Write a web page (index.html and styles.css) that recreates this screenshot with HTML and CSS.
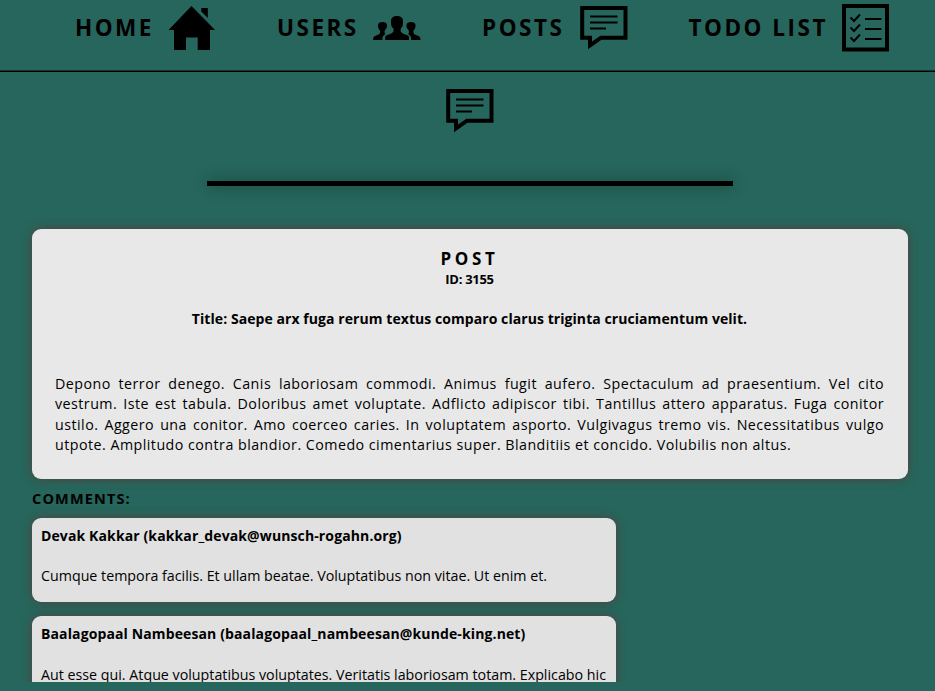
FILE: index.html
```html
<!DOCTYPE html>
<html lang="en">
<head>
<meta charset="utf-8">
<title>Post</title>
<link rel="stylesheet" href="styles.css">
</head>
<body>
<svg width="0" height="0" class="defs">
  <symbol id="posts" viewBox="0 0 48 48">
    <path d="M2.200 4H45.500V33.700H21L10 41.500V33.700H2.200Z" fill="none" stroke="#000" stroke-width="4"/>
    <path d="M10 12.500H37.500M10 18.500H37.500M10 24.500H26" stroke="#000" stroke-width="2"/>
  </symbol>
</svg>
<header class="nav">
  <a class="item"><span class="label home">HOME</span>
    <svg class="icon" viewBox="0 0 48 48"><path d="M23.500 6L47 30H42V50H29.700V37.500H18V50H6V30H0.500Z"/><path d="M33.300 8H39.800V18L33.300 11.500Z"/></svg></a>
  <a class="item"><span class="label users">USERS</span>
    <svg class="icon" viewBox="0 0 48 48"><path d="M12.200 40H36V37C36 34.500 29 34.500 27.700 31.500V28.500C30 27 30 24.500 30 21C30 17.500 27.500 16 24 16S18 17.500 18 21C18 24.500 18 27 20.500 28.500V31.500C19 34.500 12.200 34.500 12.200 37Z"/><path id="side" d="M0 40H9.500C9 36.500 10.500 35.500 12.500 34C11 33 11.500 31 12 30C13.800 28.500 14 27 14 25C14 23 12 22 9.500 22S5 23 5 25C5 27 5.200 29 7 30.500C7.500 34 6 34.500 3 35.500C1 36.500 0 37 0 40Z"/><use href="#side" transform="translate(47.500 0) scale(-1 1)"/></svg></a>
  <a class="item"><span class="label posts">POSTS</span>
    <svg class="icon" viewBox="0 0 48 48"><use href="#posts"/></svg></a>
  <a class="item"><span class="label todo">TODO LIST</span>
    <svg class="icon" viewBox="0 0 48 48"><g fill="none" stroke="#000"><rect x="2" y="6" width="43" height="43.500" stroke-width="4"/><path d="M8.500 17.500L12 21L18 14.500M8.500 27.500L12 31L18 24.500M8.500 37.500L12 41L18 34.500M23 19H39.500M23 29H39.500M23 39H39.500" stroke-width="2"/></g></svg></a>
</header>
<main class="content">
  <svg class="page-icon" viewBox="0 0 48 48"><use href="#posts"/></svg>
  <div class="rule"></div>
  <article class="post">
    <h1>POST</h1>
    <div class="id">ID: 3155</div>
    <h2>Title: Saepe arx fuga rerum textus comparo clarus triginta cruciamentum velit.</h2>
    <p><span class="line">Depono terror denego. Canis laboriosam commodi. Animus fugit aufero. Spectaculum ad praesentium. Vel cito</span>
    <span class="line">vestrum. Iste est tabula. Doloribus amet voluptate. Adflicto adipiscor tibi. Tantillus attero apparatus. Fuga conitor</span>
    <span class="line">ustilo. Aggero una conitor. Amo coerceo caries. In voluptatem asporto. Vulgivagus tremo vis. Necessitatibus vulgo</span>
    <span class="line last">utpote. Amplitudo contra blandior. Comedo cimentarius super. Blanditiis et concido. Volubilis non altus.</span></p>
  </article>
  <h3>COMMENTS:</h3>
  <section class="comments">
    <div class="comment">
      <h4>Devak Kakkar (kakkar_devak@wunsch-rogahn.org)</h4>
      <p>Cumque tempora facilis. Et ullam beatae. Voluptatibus non vitae. Ut enim et.</p>
    </div>
    <div class="comment">
      <h4>Baalagopaal Nambeesan (baalagopaal_nambeesan@kunde-king.net)</h4>
      <p>Aut esse qui. Atque voluptatibus voluptates. Veritatis laboriosam totam. Explicabo hic</p>
    </div>
  </section>
</main>
</body>
</html>
```
FILE: styles.css
```css
* { box-sizing: border-box; margin: 0; padding: 0; }
body {
  width: 935px; height: 691px; overflow: hidden;
  background: #26665c; color: #000;
  font-family: "Open Sans", "Noto Sans", sans-serif;
}
.defs { position: absolute; }
.nav {
  display: flex; gap: 61px; height: 72px; padding-left: 75px;
  background: linear-gradient(#13332e 50%, #000 50%) bottom / 100% 2px no-repeat;
}
.item { display: flex; flex: none; }
.label { font-size: 22.5px; font-weight: 700; line-height: 30px; padding-top: 13px; letter-spacing: 2.5px; white-space: nowrap; }
.home { width: 93px; }
.users { width: 96px; }
.posts { width: 97.5px; }
.todo { width: 153.5px; }
.icon { width: 48px; height: 48px; flex: none; overflow: visible; }
.item:nth-child(3) .icon { margin-top: 4px; }
.content { display: flow-root; padding-left: 32px; height: 610px; overflow: hidden; }
.page-icon { display: block; width: 48px; height: 48px; margin: 15px 0 0 414px; }
.rule { width: 526px; height: 5px; margin: 46px 0 0 175px; background: #000; box-shadow: 0 0 15px rgba(0, 0, 0, .45); }
.post {
  width: 876px; height: 250px; margin-top: 43px; padding: 19px 24px 0 23px;
  border-radius: 9px; background: #e8e8e8; box-shadow: 0 0 10px #553f3f;
  text-align: center;
}
h1 { font-size: 17px; line-height: 22px; font-weight: 700; letter-spacing: 3.7px; }
.id { margin-top: -1px; font-size: 13px; line-height: 20px; font-weight: 700; letter-spacing: -.3px; }
h2 { margin-top: 20px; font-size: 14px; line-height: 20px; font-weight: 700; letter-spacing: .065px; white-space: nowrap; }
.post p { margin-top: 45px; font-size: 14.25px; line-height: 20.3px; font-weight: 400; letter-spacing: .47px; }
.line { display: block; text-align-last: justify; white-space: nowrap; }
.last { text-align-last: left; }
h3 { margin-top: 10px; font-size: 14.5px; line-height: 20px; font-weight: 700; letter-spacing: 1.15px; }
.comments { display: flex; flex-direction: column; gap: 14px; margin-top: 9px; }
.comment { width: 584px; height: 84px; padding: 8px 9px; border-radius: 9px; background: #e1e1e1; box-shadow: 0 0 10px #553f3f; }
h4 { font-size: 14px; line-height: 20px; font-weight: 700; letter-spacing: .12px; white-space: nowrap; }
.comment p { margin-top: 20px; font-size: 14.25px; line-height: 20px; white-space: nowrap; }
.comment + .comment p { margin-top: 21px; }
```
